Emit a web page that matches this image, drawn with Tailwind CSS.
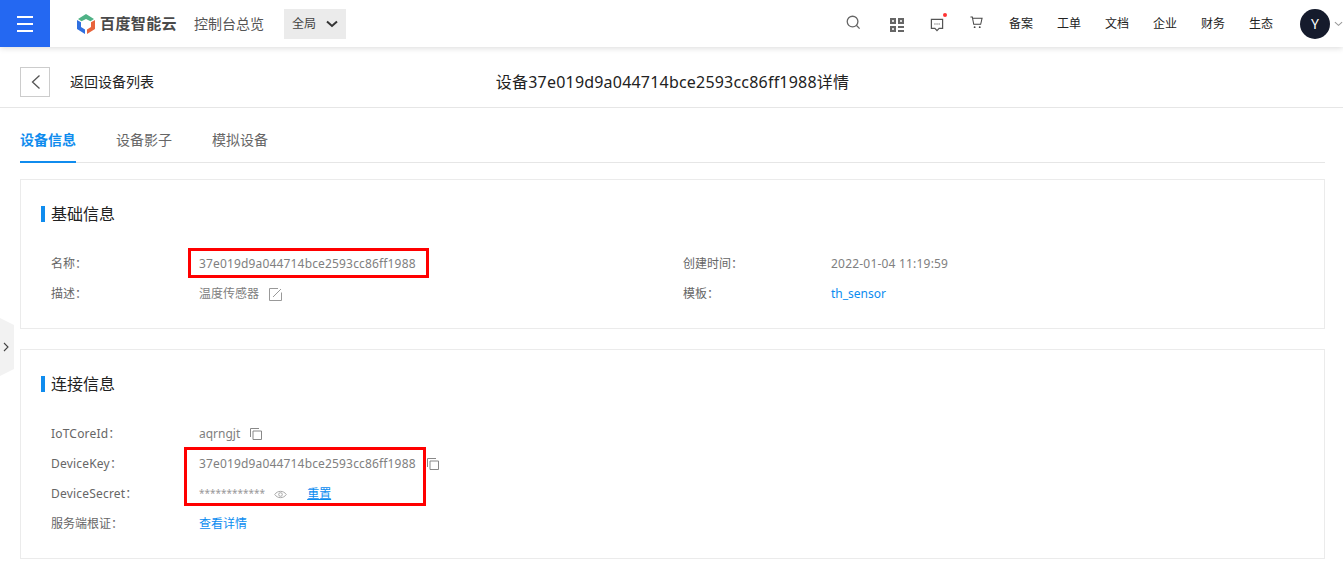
<!DOCTYPE html>
<html lang="zh-CN">
<head>
  <meta charset="UTF-8" />
  <title>设备详情</title>
  <script src="https://cdn.jsdelivr.net/npm/@tailwindcss/browser@4"></script>
</head>
<body class="relative h-[564px] overflow-hidden bg-white font-['Noto_Sans','Noto_Sans_CJK_SC',sans-serif] text-xs text-[#333]">

  <!-- Top bar -->
  <header class="relative z-10 flex h-[47px] items-center bg-white shadow-[0_1px_6px_rgba(0,0,0,0.15)]">
    <div class="flex h-full w-[50px] flex-col items-center justify-center gap-[5px] bg-[#2468f2]">
      <span class="h-[2px] w-4 bg-white"></span>
      <span class="h-[2px] w-4 bg-white"></span>
      <span class="h-[2px] w-4 bg-white"></span>
    </div>
    <svg class="ml-[26px]" width="20" height="22" viewBox="0 0 20 22">
      <path d="M10 1 18 6 14.500 8.200 10 6 5.500 8.200 2 6z" fill="#4fb286"/>
      <path d="M1 7 5 9.200V14L9 16.500V21L1 16z" fill="#2f6fe0"/>
      <path d="M19 7 15 9.200V14L11 16.500V21L19 16z" fill="#e8643c"/>
    </svg>
    <span class="ml-[4px] text-[15px] leading-none font-bold tracking-[0.4px] text-[#4a4a4a]">百度智能云</span>
    <span class="ml-[17px] text-sm text-[#555]">控制台总览</span>
    <div class="ml-[20px] flex h-[30px] w-[62px] items-center bg-[#ebebeb] pl-2 text-[#444]">
      <span>全局</span>
      <svg class="ml-[10px]" width="12" height="8" viewBox="0 0 12 8"><path d="M1 1.500 6 6l5-4.500" fill="none" stroke="#333" stroke-width="2"/></svg>
    </div>

    <div class="ml-auto flex items-center">
      <svg width="15" height="15" viewBox="0 0 16 16" class="mr-[29px] mb-[3px]"><circle cx="7" cy="7" r="5.700" fill="none" stroke="#666" stroke-width="1.400"/><path d="m11 11 3.500 3.500" stroke="#666" stroke-width="1.400"/></svg>
      <svg width="14" height="14" viewBox="0 0 14 14" class="mr-[26px] mt-[2px]" fill="#666"><rect x="0" y="0" width="6" height="6"/><rect x="8" y="0" width="6" height="6"/><rect x="0" y="8" width="6" height="6"/><rect x="8" y="8" width="6" height="2"/><rect x="8" y="12" width="6" height="2"/><rect x="2" y="2" width="2" height="2" fill="#ddd"/><rect x="10" y="2" width="2" height="2" fill="#ddd"/><rect x="2" y="10" width="2" height="2" fill="#ddd"/></svg>
      <div class="relative mr-[26px]">
        <svg width="14" height="16" viewBox="0 0 16 16" class="mt-[2px] block"><path d="M1.600 1.600h12.800v10.300h-4L8 14.400l-2.400-2.500h-4z" fill="none" stroke="#555" stroke-width="1.400"/><path d="M5 6.800h1.300M7.400 6.800h1.300M9.800 6.800h1.300" stroke="#555" stroke-width="1.300"/></svg>
        <span class="absolute top-[-2px] right-[-3px] size-1 rounded-full bg-[#f33]"></span>
      </div>
      <svg width="13" height="13" viewBox="0 0 14 14" class="mr-[26px] mb-[3px]"><path d="M.5 1h2l1.500 8h7.500l1.500-6.500H3" fill="none" stroke="#444" stroke-width="1.100"/><circle cx="5" cy="12" r="1" fill="#444"/><circle cx="10.500" cy="12" r="1" fill="#444"/></svg>
      <nav class="flex gap-[24px] text-[#222]">
        <span>备案</span><span>工单</span><span>文档</span><span>企业</span><span>财务</span><span>生态</span>
      </nav>
      <div class="ml-[27px] flex size-[30px] items-center justify-center rounded-full bg-[#151b2c] text-sm text-white">Y</div>
      <svg class="mr-0 ml-1" width="9" height="6" viewBox="0 0 10 6"><path d="m1 1 4 3.500L9 1" fill="none" stroke="#999" stroke-width="1.200"/></svg>
    </div>
  </header>

  <!-- Page title row -->
  <div class="relative flex h-[61px] items-center border-b border-[#e6e6e6] pt-[10px] pl-5">
    <div class="flex size-[30px] items-center justify-center border border-[#ccc]">
      <svg width="11" height="16" viewBox="0 0 11 16"><path d="M9.500 1.500 2.500 8l7 6.500" fill="none" stroke="#555" stroke-width="1.300"/></svg>
    </div>
    <span class="ml-5 text-sm text-[#222]">返回设备列表</span>
    <h1 class="absolute inset-x-0 pl-[2px] text-center text-base font-normal tracking-[0.2px] text-[#222]">设备37e019d9a044714bce2593cc86ff1988详情</h1>
  </div>

  <div class="pr-[18px] pl-5">
    <!-- Tabs -->
    <div class="flex h-[55px] gap-10 border-b border-[#e6e6e6] text-sm text-[#666]">
      <span class="mb-[-1px] flex items-center border-b-2 border-[#108cee] pt-[10px] font-bold text-[#108cee]">设备信息</span>
      <span class="flex items-center pt-[9px]">设备影子</span>
      <span class="flex items-center pt-[9px]">模拟设备</span>
    </div>

    <!-- 基础信息 -->
    <section class="mt-4 h-[150px] border border-[#ebebeb] pt-[26px] pl-5">
      <h2 class="flex h-4 items-center border-l-4 border-[#108cee] pl-[6px] text-base font-normal text-[#222]">基础信息</h2>
      <div class="mt-[27px] ml-[10px] grid grid-cols-[632px_1fr] text-[#666]">
        <div class="flex h-[30px] items-center"><span class="w-[148px]">名称：</span><span class="tracking-[0.16px] text-[#808080]">37e019d9a044714bce2593cc86ff1988</span></div>
        <div class="flex h-[30px] items-center"><span class="w-[148px]">创建时间：</span><span class="tracking-[0.2px] text-[#808080]">2022-01-04 11:19:59</span></div>
        <div class="flex h-[30px] items-center"><span class="w-[148px]">描述：</span><span class="text-[#808080]">温度传感器</span>
          <svg class="ml-[10px]" width="13" height="13" viewBox="0 0 13 13"><path d="M12.500 4.500v8H.5V.5H9M4 9l8-8" fill="none" stroke="#999"/></svg>
        </div>
        <div class="flex h-[30px] items-center"><span class="w-[148px]">模板：</span><span class="text-[#0a8cf0]">th_sensor</span></div>
      </div>
    </section>

    <!-- 连接信息 -->
    <section class="mt-5 h-[210px] border border-[#ebebeb] pt-[26px] pl-5">
      <h2 class="flex h-4 items-center border-l-4 border-[#108cee] pl-[6px] text-base font-normal text-[#222]">连接信息</h2>
      <div class="mt-[27px] ml-[10px] text-[#666]">
        <div class="flex h-[30px] items-center"><span class="w-[148px] tracking-[0.2px]">IoTCoreId：</span><span class="text-[#808080]">aqrngjt</span>
          <svg class="ml-[10px]" width="12" height="12" viewBox="0 0 12 12"><path d="M.5 9V.5H9M3 3h8.500v8.500H3z" fill="none" stroke="#888"/></svg>
        </div>
        <div class="flex h-[30px] items-center"><span class="w-[148px] tracking-[0.2px]">DeviceKey：</span><span class="tracking-[0.16px] text-[#808080]">37e019d9a044714bce2593cc86ff1988</span>
          <svg class="ml-[11px]" width="12" height="12" viewBox="0 0 12 12"><path d="M.5 9V.5H9M3 3h8.500v8.500H3z" fill="none" stroke="#888"/></svg>
        </div>
        <div class="flex h-[30px] items-center"><span class="w-[148px] tracking-[0.2px]">DeviceSecret：</span><span class="text-[10px] text-[#999]">************</span>
          <svg class="ml-[9px]" width="13" height="9" viewBox="0 0 13 9"><path d="M.7 4.500C3.500.3 9.500.3 12.300 4.500 9.500 8.700 3.500 8.700.7 4.500z" fill="none" stroke="#aaa"/><circle cx="6.500" cy="4.500" r="1.800" fill="none" stroke="#aaa"/></svg>
          <span class="ml-[20px] text-[#0a8cf0] underline">重置</span>
        </div>
        <div class="flex h-[30px] items-center"><span class="w-[148px]">服务端根证：</span><span class="text-[#0a8cf0]">查看详情</span></div>
      </div>
    </section>
  </div>

  <!-- Collapsed side panel toggle -->
  <div class="absolute top-[318px] left-0 flex h-[58px] w-[14px] items-center bg-[#f2f2f2] [clip-path:polygon(0_0,100%_12%,100%_88%,0_100%)]">
    <svg class="ml-[3px]" width="6" height="10" viewBox="0 0 6 10"><path d="m1 1 4 4-4 4" fill="none" stroke="#444" stroke-width="1.100"/></svg>
  </div>

  <!-- Annotation boxes from the screenshot -->
  <div class="absolute top-[248px] left-[188px] h-[30px] w-[241px] border-[3px] border-[#f00]"></div>
  <div class="absolute top-[447px] left-[184px] h-[59px] w-[242px] border-[3px] border-[#f00]"></div>
</body>
</html>
